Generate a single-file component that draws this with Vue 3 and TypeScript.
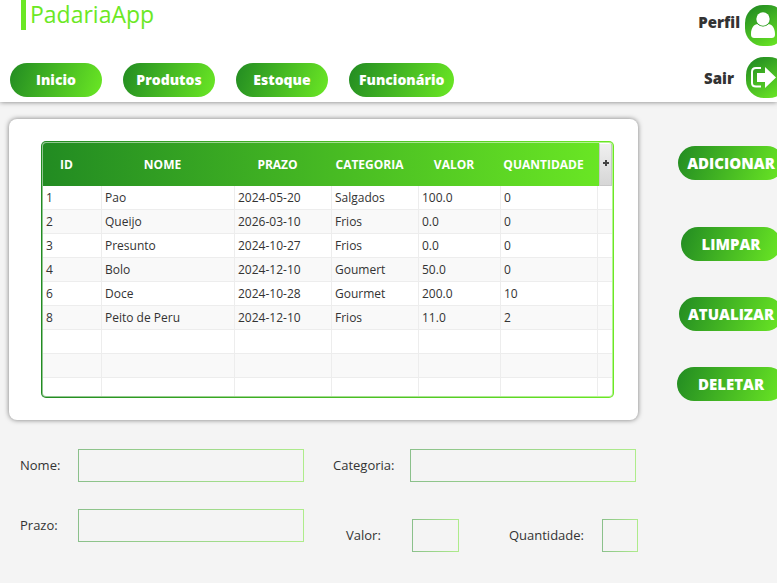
<script setup lang="ts">
import { ref } from 'vue'

interface Produto {
  id: number
  nome: string
  prazo: string
  categoria: string
  valor: string
  quantidade: number
}

const menu: string[] = ['Inicio', 'Produtos', 'Estoque', 'Funcionário']
const acoes: string[] = ['ADICIONAR', 'LIMPAR', 'ATUALIZAR', 'DELETAR']
const colunas: string[] = ['ID', 'NOME', 'PRAZO', 'CATEGORIA', 'VALOR', 'QUANTIDADE']

const produtos = ref<Produto[]>([
  { id: 1, nome: 'Pao', prazo: '2024-05-20', categoria: 'Salgados', valor: '100.0', quantidade: 0 },
  { id: 2, nome: 'Queijo', prazo: '2026-03-10', categoria: 'Frios', valor: '0.0', quantidade: 0 },
  { id: 3, nome: 'Presunto', prazo: '2024-10-27', categoria: 'Frios', valor: '0.0', quantidade: 0 },
  { id: 4, nome: 'Bolo', prazo: '2024-12-10', categoria: 'Goumert', valor: '50.0', quantidade: 0 },
  { id: 6, nome: 'Doce', prazo: '2024-10-28', categoria: 'Gourmet', valor: '200.0', quantidade: 10 },
  { id: 8, nome: 'Peito de Peru', prazo: '2024-12-10', categoria: 'Frios', valor: '11.0', quantidade: 2 },
])
const linhasVazias = 3

const form = ref({ nome: '', categoria: '', prazo: '', valor: '', quantidade: '' })
</script>

<template>
  <div class="page">
    <header class="topbar">
      <div class="left">
        <h1 class="brand">PadariaApp</h1>
        <nav class="menu">
          <button v-for="item in menu" :key="item" type="button" class="pill">{{ item }}</button>
        </nav>
      </div>
      <div class="account">
        <button type="button" class="account-item">
          <span>Perfil</span>
          <svg class="badge" viewBox="0 0 41 41" aria-hidden="true">
            <defs>
              <linearGradient id="g-badge" x1="0.2" y1="0" x2="0.8" y2="1">
                <stop offset="0" stop-color="#228b22" />
                <stop offset="1" stop-color="#6be824" />
              </linearGradient>
            </defs>
            <rect width="41" height="41" rx="18" fill="url(#g-badge)" />
            <path d="M6 29c0-6 3-10 7-10 3 3 7 3 10 0 4 0 7 4 7 10 0 3-1 4-4 4H10c-3 0-4-1-4-4z" fill="#fff" />
            <circle cx="18" cy="14" r="7.500" fill="#2f9f22" />
            <circle cx="18" cy="14" r="6.700" fill="#fff" />
          </svg>
        </button>
        <button type="button" class="account-item exit">
          <span>Sair</span>
          <svg class="badge" viewBox="0 0 41 41" aria-hidden="true">
            <rect width="41" height="41" rx="18" fill="url(#g-badge)" />
            <path d="M15 11H10Q6 11 6 15V26Q6 29.500 10 29.500H15" fill="none" stroke="#fff" stroke-width="2" />
            <path d="M11 16h8v-6l11 10.500L19 31v-6h-8z" fill="#fff" />
          </svg>
        </button>
      </div>
    </header>

    <main class="content">
      <section class="card">
        <div class="frame">
          <div class="frame-inner">
            <div class="viewport">
              <table>
                <colgroup>
                  <col class="c-id" /><col class="c-nome" /><col class="c-prazo" /><col class="c-cat" />
                  <col class="c-valor" /><col class="c-qtd" /><col class="c-menu" />
                </colgroup>
                <thead>
                  <tr>
                    <th v-for="c in colunas" :key="c" scope="col">{{ c }}</th>
                    <th class="menu-cell">
                      <button type="button" class="col-menu" aria-label="Colunas">
                        <svg viewBox="0 0 6 6" width="6" height="6" aria-hidden="true">
                          <path d="M2 0h2v2h2v2h-2v2h-2v-2h-2v-2h2z" fill="#444" />
                        </svg>
                      </button>
                    </th>
                  </tr>
                </thead>
                <tbody>
                  <tr v-for="p in produtos" :key="p.id">
                    <td>{{ p.id }}</td>
                    <td>{{ p.nome }}</td>
                    <td>{{ p.prazo }}</td>
                    <td>{{ p.categoria }}</td>
                    <td>{{ p.valor }}</td>
                    <td>{{ p.quantidade }}</td>
                    <td></td>
                  </tr>
                  <tr v-for="n in linhasVazias" :key="'vazia' + n">
                    <td v-for="k in 7" :key="k"></td>
                  </tr>
                </tbody>
              </table>
            </div>
          </div>
        </div>
      </section>

      <aside class="actions">
        <button v-for="a in acoes" :key="a" type="button" class="pill action">{{ a }}</button>
      </aside>

      <form class="form" @submit.prevent>
        <div class="group-left">
          <label for="nome">Nome:</label>
          <input id="nome" v-model="form.nome" type="text" />
          <label for="prazo">Prazo:</label>
          <input id="prazo" v-model="form.prazo" type="text" />
        </div>
        <div class="group-right">
          <div class="row">
            <label for="categoria">Categoria:</label>
            <input id="categoria" v-model="form.categoria" type="text" />
          </div>
          <div class="row row-small">
            <label for="valor">Valor:</label>
            <input id="valor" v-model="form.valor" type="text" />
            <label for="quantidade" class="push">Quantidade:</label>
            <input id="quantidade" v-model="form.quantidade" type="text" />
          </div>
        </div>
      </form>
    </main>
  </div>
</template>

<style>
body {
  background: #f4f4f4;
}
</style>

<style scoped>
.page {
  min-height: 100vh;
  overflow: hidden;
  background: #f4f4f4;
  color: #333;
  font-family: "Open Sans", "Noto Sans", sans-serif;
  font-size: 12px;
}
button {
  border: 0;
  padding: 0;
  font-family: inherit;
  cursor: pointer;
}
.topbar {
  display: flex;
  justify-content: space-between;
  box-sizing: border-box;
  height: 102px;
  background: #fff;
  box-shadow: 0 0 5px rgba(0, 0, 0, 0.5);
}
.left {
  display: flex;
  flex-direction: column;
  gap: 33px;
}
.brand {
  margin: 0 0 0 21px;
  height: 30px;
  padding-left: 4px;
  border-left: 5px solid #6be824;
  color: #6be824;
  font-size: 23px;
  font-weight: 400;
  line-height: 29px;
}
.menu {
  display: flex;
  gap: 21px;
  padding-left: 10px;
}
.pill {
  min-width: 92px;
  height: 34px;
  padding: 0 10px;
  border-radius: 17px;
  background: linear-gradient(110deg, #228b22, #6be824);
  color: #fff;
  font-size: 14px;
  font-weight: 800;
  line-height: 34px;
  white-space: nowrap;
}
.account {
  display: flex;
  flex-direction: column;
  align-items: flex-end;
  gap: 11px;
  padding-top: 5px;
  margin-right: -10px;
}
.account-item {
  display: flex;
  gap: 5px;
  padding-right: 1px;
  background: none;
  color: #333;
  font-size: 15px;
  font-weight: 800;
  line-height: 34px;
}
.exit {
  align-items: center;
  gap: 12px;
  padding-right: 0;
}
.badge {
  width: 41px;
  height: 41px;
}
.content {
  display: grid;
  grid-template-columns: minmax(0, 1fr) 108px;
  column-gap: 39px;
  padding: 17px 0 0 9px;
  margin-right: -8px;
}
.card {
  padding: 22px 24px 22px 32px;
  border-radius: 8px;
  background: #fff;
  box-shadow: 0 0 5px rgba(0, 0, 0, 0.5);
}
.frame {
  padding: 1px;
  border-radius: 5px;
  background: linear-gradient(to right, #228b22, #6be824);
}
.frame-inner {
  padding: 1px;
  border-radius: 4px;
  background: rgba(255, 255, 255, 0.5);
}
.viewport {
  height: 253px;
  overflow: hidden;
  border-radius: 3px;
  background: #fff;
}
table {
  width: 100%;
  table-layout: fixed;
  border-collapse: separate;
  border-spacing: 0;
}
.c-id { width: 59px; }
.c-nome { width: 133px; }
.c-prazo { width: 97px; }
.c-cat { width: 87px; }
.c-valor { width: 82px; }
.c-qtd { width: 97px; }
.c-menu { width: 14px; }
thead tr {
  background: linear-gradient(to right, #228b22, #6be824);
}
th {
  box-sizing: border-box;
  height: 43px;
  padding: 0 12px 0 0;
  color: #fff;
  font-size: 12px;
  font-weight: 700;
  text-align: center;
}
.menu-cell {
  padding: 0 0 0 1px;
}
.col-menu {
  display: flex;
  align-items: center;
  justify-content: center;
  box-sizing: border-box;
  width: 100%;
  height: 43px;
  padding-bottom: 3px;
  border: 1px solid #c8c8c8;
  border-top-color: #fff;
  background: linear-gradient(#f0f0f0, #d6d6d6);
}
td {
  box-sizing: border-box;
  height: 24px;
  padding: 0 0 0 3px;
  border-right: 1px solid #ededed;
  border-bottom: 1px solid #ededed;
  line-height: 20px;
  white-space: nowrap;
}
td:last-child {
  border-right: 0;
}
tbody tr:nth-child(even) {
  background: #f9f9f9;
}
.actions {
  display: grid;
  grid-template-rows: 45px repeat(3, 34px);
  row-gap: 36px;
  justify-items: center;
  align-content: start;
  padding-top: 27px;
}
.action {
  min-width: 100px;
  padding: 0 9px;
  font-size: 15px;
}
.action:last-child {
  min-width: 108px;
}
.form {
  display: flex;
  gap: 29px;
  padding: 29px 0 0 11px;
}
label {
  font-size: 13px;
  line-height: 33px;
  white-space: nowrap;
}
input {
  box-sizing: border-box;
  width: 100%;
  min-width: 0;
  height: 33px;
  padding: 0 8px;
  border: 1px solid;
  border-image: linear-gradient(to right, #8bc08b, #aeec8b) 1;
  outline: 0;
  background: transparent;
  color: #333;
  font-family: inherit;
  font-size: 13px;
}
.group-left {
  display: grid;
  grid-template-columns: 58px minmax(0, 1fr);
  row-gap: 27px;
  align-content: start;
  width: 284px;
}
.group-right {
  display: flex;
  flex: 1;
  flex-direction: column;
  gap: 37px;
}
.row {
  display: grid;
  grid-template-columns: 77px minmax(0, 1fr);
  padding-right: 2px;
}
.row-small {
  grid-template-columns: 66px 47px minmax(0, 1fr) 36px;
  padding: 0 0 0 13px;
}
.push {
  padding-right: 18px;
  text-align: right;
}
</style>
